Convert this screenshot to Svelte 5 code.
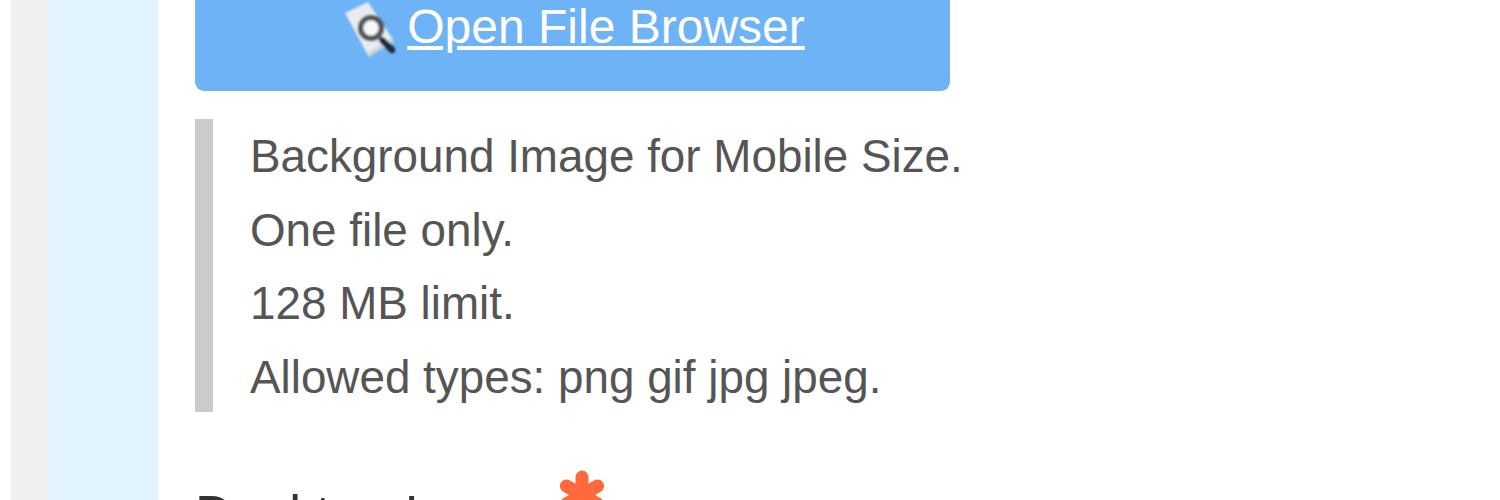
<script>
  const notes = [
    'Background Image for Mobile Size.',
    'One file only.',
    '128 MB limit.',
    'Allowed types: png gif jpg jpeg.'
  ];
</script>

<div class="page">
  <div class="gutter"></div>
  <div class="rail"></div>
  <main class="content">
    <div class="browse">
      <svg class="browse-icon" width="58" height="60" viewBox="-2 0 58 60" aria-hidden="true">
        <defs>
          <filter id="soft"><feGaussianBlur stdDeviation="0.8" /></filter>
        </defs>
        <g filter="url(#soft)">
          <path d="M3 13 L26 2 L52 41 L27 57 Z" fill="#e9ebee" />
          <path d="M27 57 L52 41 L50 38 L26 53 Z" fill="#c9d3de" />
          <circle cx="29" cy="28" r="10.5" fill="#f6f7f8" stroke="#55575b" stroke-width="5.5" />
          <path d="M37 37 L40 40" stroke="#5f6368" stroke-width="5" />
          <path d="M41 41 L50 50" stroke="#1f2a38" stroke-width="6.5" stroke-linecap="round" />
        </g>
      </svg>
      <a href="#browse">Open File Browser</a>
    </div>

    <div class="notes">
      {#each notes as note}
        <p>{note}</p>
      {/each}
    </div>

    <div class="label">
      <span>Desktop Image</span>
      <svg class="req" width="46" height="48" viewBox="0 0 46 48" aria-label="Required">
        <g stroke="#ff6a3c" stroke-width="13" stroke-linecap="round">
          <path d="M23 7 L23 43" />
          <path d="M7.4 16 L38.6 34" />
          <path d="M38.6 16 L7.4 34" />
        </g>
      </svg>
    </div>
  </main>
</div>

<style>
  :global(body) {
    margin: 0;
    background: #fff;
  }
  .page {
    display: flex;
    height: 500px;
    overflow: hidden;
    font-family: "Liberation Sans", Arial, sans-serif;
  }
  .gutter {
    width: 37px;
    margin-left: 11px;
    background: #f0f0f0;
  }
  .rail {
    width: 110px;
    background: #e0f3fe;
  }
  .content {
    padding-left: 37px;
    width: 755px;
  }
  .browse {
    display: flex;
    align-items: flex-start;
    justify-content: center;
    gap: 9px;
    height: 91px;
    box-sizing: border-box;
    background: #6db3f6;
    border-radius: 0 0 9px 9px;
  }
  .browse-icon {
    flex: none;
  }
  .browse a {
    color: #fff;
    font-size: 48px;
    line-height: 54px;
  }
  .notes {
    margin-top: 28px;
    height: 293px;
    box-sizing: border-box;
    border-left: 18px solid #cbcbcb;
    padding: 1px 0 0 37px;
    white-space: nowrap;
    color: #555;
    font-size: 45.8px;
  }
  .notes p {
    margin: 0;
    line-height: 73.5px;
  }
  .label {
    display: flex;
    align-items: flex-start;
    gap: 8px;
    margin-top: 58px;
    font-size: 53px;
    line-height: 60px;
    color: #333;
    white-space: nowrap;
  }
  .label span {
    padding-top: 15px;
  }
  .req {
    flex: none;
  }
</style>
